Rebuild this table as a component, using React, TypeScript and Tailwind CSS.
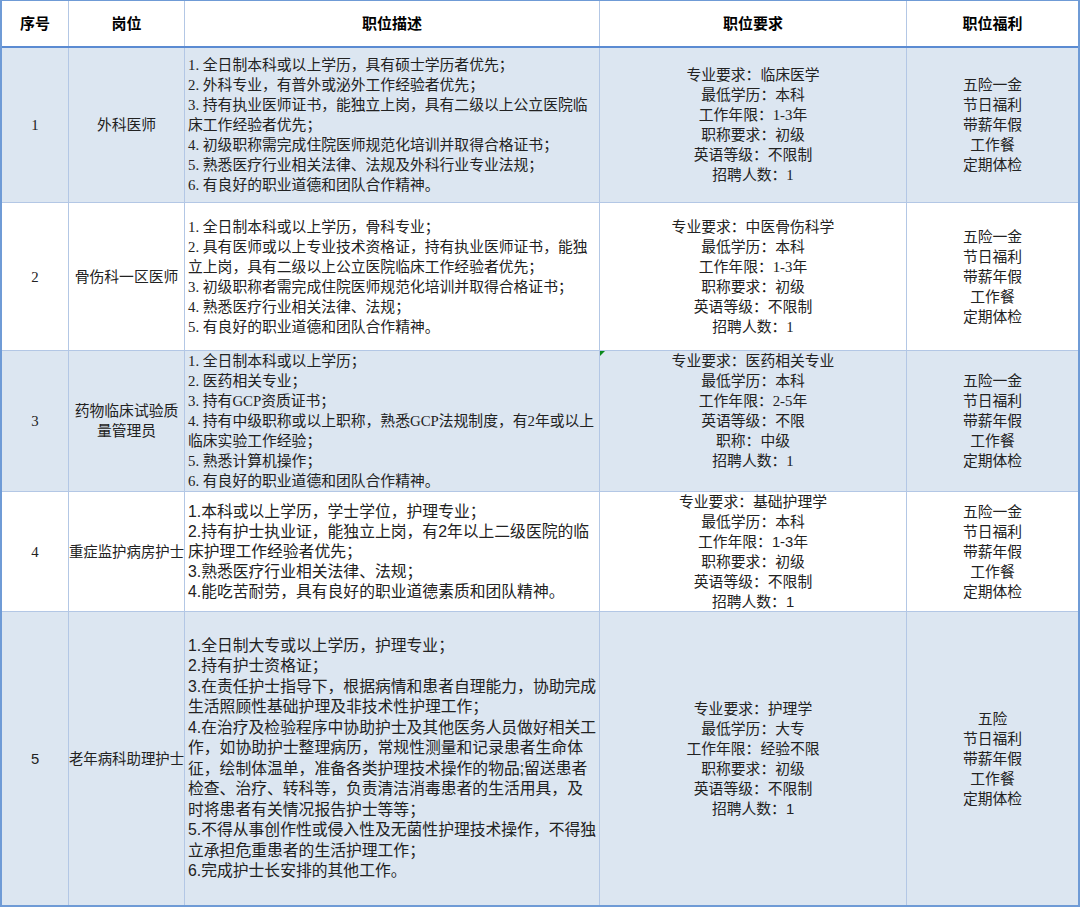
const serif = "font-['Liberation_Serif','Noto_Sans_CJK_SC',serif]"
const sans = "font-['Liberation_Sans','Noto_Sans_CJK_SC',sans-serif]"

const rows = [
    {
        no: '1',
        title: ['外科医师'],
        bg: 'bg-[#dce6f1]',
        h: 'h-[155px]',
        font: serif,
        noFont: serif,
        descSize: 'text-[14.8px] leading-[20px]',
        desc: [
            '1. 全日制本科或以上学历，具有硕士学历者优先；',
            '2. 外科专业，有普外或泌外工作经验者优先；',
            '3. 持有执业医师证书，能独立上岗，具有二级以上公立医院临',
            '床工作经验者优先；',
            '4. 初级职称需完成住院医师规范化培训并取得合格证书；',
            '5. 熟悉医疗行业相关法律、法规及外科行业专业法规；',
            '6. 有良好的职业道德和团队合作精神。',
        ],
        req: ['专业要求：临床医学', '最低学历：本科', '工作年限：1-3年', '职称要求：初级', '英语等级：不限制', '招聘人数：1'],
        reqPad: '',
        perks: ['五险一金', '节日福利', '带薪年假', '工作餐', '定期体检'],
    },
    {
        no: '2',
        title: ['骨伤科一区医师'],
        bg: 'bg-white',
        h: 'h-[148px]',
        font: serif,
        noFont: serif,
        descSize: 'text-[14.8px] leading-[20px]',
        desc: [
            '1. 全日制本科或以上学历，骨科专业；',
            '2. 具有医师或以上专业技术资格证，持有执业医师证书，能独',
            '立上岗，具有二级以上公立医院临床工作经验者优先；',
            '3. 初级职称者需完成住院医师规范化培训并取得合格证书；',
            '4. 熟悉医疗行业相关法律、法规；',
            '5. 有良好的职业道德和团队合作精神。',
        ],
        req: ['专业要求：中医骨伤科学', '最低学历：本科', '工作年限：1-3年', '职称要求：初级', '英语等级：不限制', '招聘人数：1'],
        reqPad: '',
        perks: ['五险一金', '节日福利', '带薪年假', '工作餐', '定期体检'],
    },
    {
        no: '3',
        title: ['药物临床试验质', '量管理员'],
        bg: 'bg-[#dce6f1]',
        h: 'h-[141px]',
        font: serif,
        noFont: serif,
        descSize: 'text-[14.8px] leading-[20px]',
        desc: [
            '1. 全日制本科或以上学历；',
            '2. 医药相关专业；',
            '3. 持有GCP资质证书；',
            '4. 持有中级职称或以上职称，熟悉GCP法规制度，有2年或以上',
            '临床实验工作经验；',
            '5. 熟悉计算机操作；',
            '6. 有良好的职业道德和团队合作精神。',
        ],
        req: ['专业要求：医药相关专业', '最低学历：本科', '工作年限：2-5年', '英语等级：不限', '职称：中级', '招聘人数：1'],
        reqPad: 'pb-[20px]',
        perks: ['五险一金', '节日福利', '带薪年假', '工作餐', '定期体检'],
        flag: true,
    },
    {
        no: '4',
        title: ['重症监护病房护士'],
        bg: 'bg-white',
        h: 'h-[120px]',
        font: sans,
        noFont: serif,
        descSize: 'text-[15.8px] leading-[20px]',
        desc: [
            '1.本科或以上学历，学士学位，护理专业；',
            '2.持有护士执业证，能独立上岗，有2年以上二级医院的临',
            '床护理工作经验者优先；',
            '3.熟悉医疗行业相关法律、法规；',
            '4.能吃苦耐劳，具有良好的职业道德素质和团队精神。',
        ],
        req: ['专业要求：基础护理学', '最低学历：本科', '工作年限：1-3年', '职称要求：初级', '英语等级：不限制', '招聘人数：1'],
        reqPad: '',
        perks: ['五险一金', '节日福利', '带薪年假', '工作餐', '定期体检'],
    },
    {
        no: '5',
        title: ['老年病科助理护士'],
        bg: 'bg-[#dce6f1]',
        h: 'h-[293px]',
        font: sans,
        noFont: sans,
        descSize: 'text-[15.8px] leading-[20.5px]',
        desc: [
            '1.全日制大专或以上学历，护理专业；',
            '2.持有护士资格证；',
            '3.在责任护士指导下，根据病情和患者自理能力，协助完成',
            '生活照顾性基础护理及非技术性护理工作；',
            '4.在治疗及检验程序中协助护士及其他医务人员做好相关工',
            '作，如协助护士整理病历，常规性测量和记录患者生命体',
            '征，绘制体温单，准备各类护理技术操作的物品;留送患者',
            '检查、治疗、转科等，负责清洁消毒患者的生活用具，及',
            '时将患者有关情况报告护士等等；',
            '5.不得从事创作性或侵入性及无菌性护理技术操作，不得独',
            '立承担危重患者的生活护理工作；',
            '6.完成护士长安排的其他工作。',
        ],
        req: ['专业要求：护理学', '最低学历：大专', '工作年限：经验不限', '职称要求：初级', '英语等级：不限制', '招聘人数：1'],
        reqPad: '',
        perks: ['五险', '节日福利', '带薪年假', '工作餐', '定期体检'],
        last: true,
    },
]

const line = 'border-[#b3c7e5]'

export default function App() {
    return (
        <div className="w-[1080px] h-[907px] bg-white text-[#222] border-t border-x-2 border-b-2 border-[#6f9bd6] overflow-hidden">
            <div className="grid grid-cols-[67px_116px_415px_307px_171px] h-[47px] border-b-2 border-[#5b8bd2] font-bold text-[15px] text-black font-['Noto_Sans_CJK_SC',sans-serif]">
                <div className={`flex items-center justify-center border-r ${line}`}>序号</div>
                <div className={`flex items-center justify-center border-r ${line}`}>岗位</div>
                <div className={`flex items-center justify-center border-r ${line}`}>职位描述</div>
                <div className={`flex items-center justify-center border-r ${line}`}>职位要求</div>
                <div className="flex items-center justify-center">职位福利</div>
            </div>
            {rows.map(r => (
                <div
                    key={r.no}
                    className={`grid grid-cols-[67px_116px_415px_307px_171px] ${r.h} ${r.bg} ${r.last ? '' : `border-b ${line}`} ${r.font} text-[14.8px] leading-[20px]`}
                >
                    <div className={`flex items-center justify-center border-r ${line} ${r.noFont}`}>{r.no}</div>
                    <div className={`flex flex-col items-center justify-center border-r ${line} whitespace-nowrap ${r.title[0].length > 7 ? 'text-[14.4px]' : ''}`}>
                        {r.title.map(t => <div key={t}>{t}</div>)}
                    </div>
                    <div className={`flex flex-col justify-center pl-[3px] border-r ${line} whitespace-nowrap ${r.descSize}`}>
                        {r.desc.map((d, i) => <div key={i}>{d}</div>)}
                    </div>
                    <div className={`relative flex flex-col items-center justify-center border-r ${line} whitespace-nowrap ${r.reqPad}`}>
                        {r.flag && (
                            <div className="absolute left-0 top-0 w-0 h-0 border-t-[5px] border-r-[5px] border-t-[#0b8a1c] border-r-transparent" />
                        )}
                        {r.req.map(q => <div key={q}>{q}</div>)}
                    </div>
                    <div className="flex flex-col items-center justify-center whitespace-nowrap">
                        {r.perks.map(p => <div key={p}>{p}</div>)}
                    </div>
                </div>
            ))}
        </div>
    )
}
